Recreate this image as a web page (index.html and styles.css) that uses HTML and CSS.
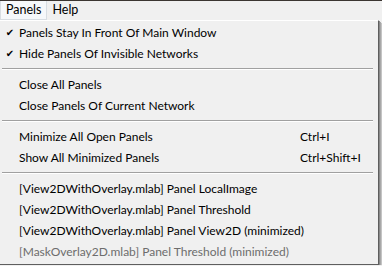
FILE: index.html
```html
<!DOCTYPE html>
<html lang="en">
<head>
  <meta charset="UTF-8" />
  <title>Panels Menu</title>
  <link rel="stylesheet" href="styles.css">
</head>
<body>
  <div class="topline"></div>
  <nav class="menubar">
    <span class="menu-title open">Panels</span>
    <span class="menu-title">Help</span>
  </nav>

  <!-- Panels dropdown -->
  <div class="dropdown">
    <div class="item"><span class="check">&#10004;</span><span>Panels Stay In Front Of Main Window</span><span></span></div>
    <div class="item"><span class="check">&#10004;</span><span>Hide Panels Of Invisible Networks</span><span></span></div>
    <div class="sep"></div>
    <div class="item"><span class="check"></span><span>Close All Panels</span><span></span></div>
    <div class="item"><span class="check"></span><span>Close Panels Of Current Network</span><span></span></div>
    <div class="sep"></div>
    <div class="item"><span class="check"></span><span>Minimize All Open Panels</span><span class="key">Ctrl+I</span></div>
    <div class="item"><span class="check"></span><span>Show All Minimized Panels</span><span class="key">Ctrl+Shift+I</span></div>
    <div class="sep"></div>
    <div class="item"><span class="check"></span><span>[View2DWithOverlay.mlab] Panel LocalImage</span><span></span></div>
    <div class="item"><span class="check"></span><span>[View2DWithOverlay.mlab] Panel Threshold</span><span></span></div>
    <div class="item"><span class="check"></span><span>[View2DWithOverlay.mlab] Panel View2D (minimized)</span><span></span></div>
    <div class="item disabled"><span class="check"></span><span>[MaskOverlay2D.mlab] Panel Threshold (minimized)</span><span></span></div>
  </div>
</body>
</html>
```

FILE: styles.css
```css
body {
  margin: 0;
  background: #f0f0f0;
  font-family: "Lato", "DejaVu Sans", sans-serif;
  font-size: 12px;
  color: #000;
  overflow: hidden;
}
.topline {
  height: 1px;
  background: #3b3531;
}
.menubar {
  display: flex;
  height: 19px;
  align-items: stretch;
}
.menu-title {
  padding: 0 6px 0 5px;
  line-height: 18px;
  font-size: 12.5px;
}
.menu-title.open {
  background: #f6f8fa;
  border: 1px solid #d8dde2;
  border-top: none;
  padding-right: 5px;
}
.dropdown {
  width: 378px;
  border-top: 1px solid #fff;
  border-right: 1px solid #5e5e5e;
  border-bottom: 1px solid #5e5e5e;
  box-shadow: 1px 1px 0 #8a8a8a, 2px 2px 0 #a8a8a8, 3px 3px 0 #c4c4c4;
  padding: 1px 0 2px 0;
}
.item {
  display: grid;
  grid-template-columns: 19px 281px auto;
  height: 21px;
  line-height: 21px;
  white-space: nowrap;
}
.item > span {
  min-width: 0;
}
.check {
  font-size: 10px;
  text-align: center;
  padding-left: 1px;
}
.disabled {
  color: #6d6d6d;
}
.sep {
  height: 0;
  margin: 4px 5px 4px 2px;
  border-top: 1px solid #a0a0a0;
  border-bottom: 1px solid #fff;
}
```
